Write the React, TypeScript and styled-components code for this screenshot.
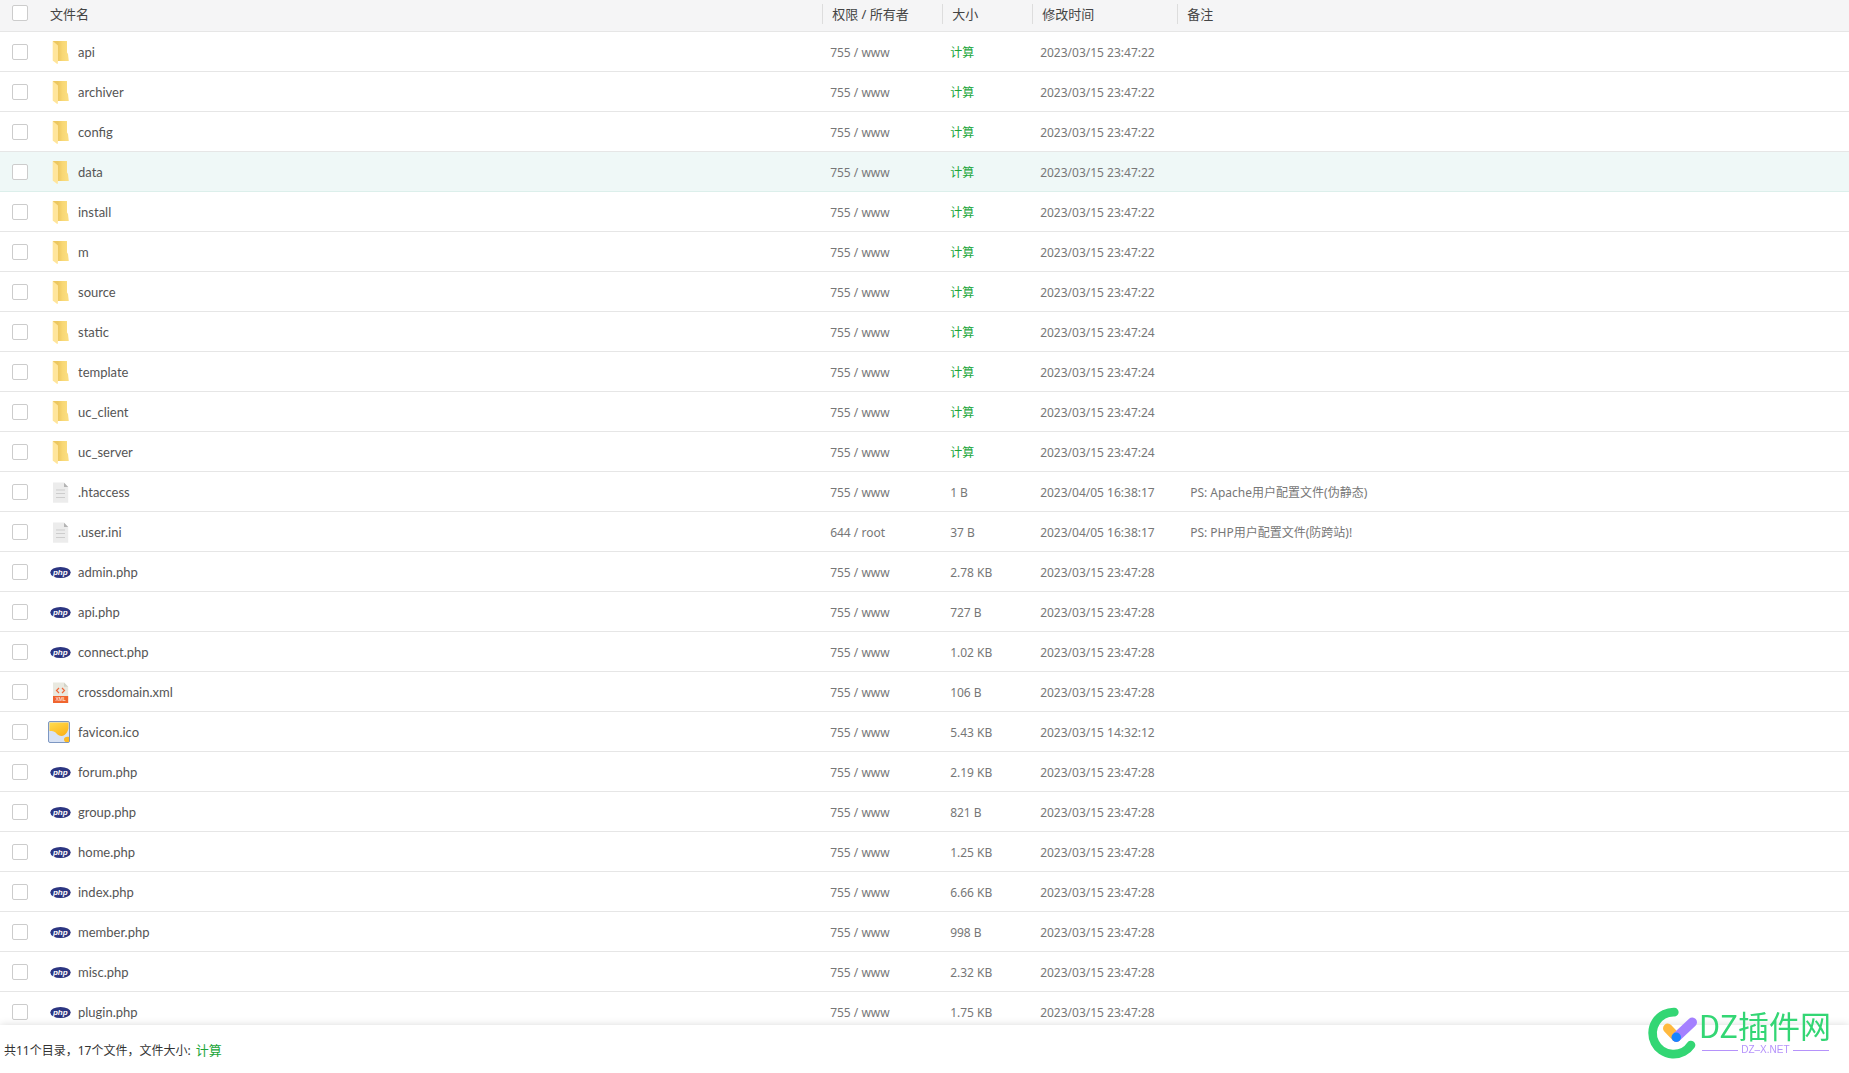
import React from "react";
import styled, { createGlobalStyle, css } from "styled-components";

const GlobalStyle = createGlobalStyle`
  *, *::before, *::after { box-sizing: border-box; }
  body {
    margin: 0;
    background: #fff;
    color: #777;
    font-family: "Noto Sans", "Noto Sans CJK SC", sans-serif;
    font-size: 12px;
  }
`;

const Page = styled.div`
  display: flex;
  flex-direction: column;
  height: 100vh;
`;

const ListArea = styled.main`
  flex: 1;
  min-height: 0;
  overflow: hidden;
`;

const Table = styled.table`
  width: 100%;
  table-layout: fixed;
  border-collapse: separate;
  border-spacing: 0;
`;

const CheckCol = styled.col`width: 40px;`;
const NameCol = styled.col`width: 42.3%;`;
const PermCol = styled.col`width: 120px;`;
const SizeCol = styled.col`width: 90px;`;
const TimeCol = styled.col`width: 145px;`;

const HeadCell = styled.th`
  height: 32px;
  padding: 4px 0 7px;
  background: #f5f5f6;
  border-bottom: 1px solid #e6e6e6;
  text-align: left;
  font-weight: 400;
`;

const HeadCheckCell = styled(HeadCell)`
  padding: 5px 0 0;
  vertical-align: top;
`;

const HeadLabel = styled.span<{ $divided?: boolean }>`
  display: block;
  height: 20px;
  padding-left: 9px;
  border-left: 1px solid ${(p) => (p.$divided ? "#ddd" : "transparent")};
  color: #444;
  font-size: 13px;
  line-height: 20px;
`;

const Row = styled.tr<{ $active?: boolean }>`
  --line: #e6e6e6;
  ${(p) =>
    p.$active &&
    css`
      --line: #dcefeb;
      background: #eff8f7;
    `}
`;

const Cell = styled.td`
  height: 40px;
  padding: 0;
  border-bottom: 1px solid var(--line);
`;

const NameCell = styled(Cell)`
  padding-left: 8px;
`;

const TextCell = styled(Cell)<{ $indent?: number }>`
  padding: 2px 0 0 ${(p) => p.$indent ?? 8}px;
  line-height: 20px;
  white-space: nowrap;
`;

const CheckBox = styled.input.attrs({ type: "checkbox" })`
  appearance: none;
  display: block;
  width: 16px;
  height: 16px;
  margin: 0 0 0 12px;
  border: 1px solid #ccc;
  border-radius: 2px;
  background: #fff;
  &:checked { background: #20a53a; }
`;

const FileLink = styled.a`
  display: flex;
  align-items: center;
  gap: 6px;
  color: #555;
  font-family: Lato, "Noto Sans CJK SC", sans-serif;
  font-size: 13px;
  line-height: 20px;
  text-decoration: none;
`;

const FileName = styled.span`
  padding-top: 1px;
`;

const Icon = styled.svg.attrs({ viewBox: "0 0 24 24", "aria-hidden": true })`
  flex: none;
  width: 24px;
  height: 24px;
`;

const CalcButton = styled.button`
  padding: 0;
  border: 0;
  background: none;
  color: #20a53a;
  font: inherit;
  line-height: 20px;
  cursor: pointer;
`;

const Footer = styled.footer`
  position: relative;
  display: flex;
  align-items: center;
  gap: 5px;
  height: 48px;
  padding: 2px 4px 0;
  background: #fff;
  box-shadow: 0 0 8px rgba(0, 0, 0, 0.15);
  color: #333;
  ${CalcButton} { font-size: 13px; }
`;

const Brand = styled.aside`
  position: fixed;
  right: 18px;
  bottom: 14px;
  display: flex;
  gap: 1px;
`;

const BrandMark = styled.svg`
  width: 50px;
  height: 52px;
`;

const BrandText = styled.div`
  display: flex;
  flex-direction: column;
  font-family: "Noto Sans CJK SC", sans-serif;
`;

const BrandName = styled.span`
  color: #33d674;
  font-size: 31px;
  line-height: 36px;
`;

const BrandSite = styled.span`
  display: flex;
  align-items: center;
  gap: 3px;
  padding: 0 2px 0 3px;
  color: #b592fb;
  font-family: "Liberation Sans", sans-serif;
  font-size: 10px;
  line-height: 14px;
  &::before, &::after {
    content: "";
    flex: 1;
    height: 1px;
    background: #b592fb;
  }
`;

type Kind = "folder" | "text" | "php" | "xml" | "image";

function FileIcon({ kind }: { kind: Kind }) {
  switch (kind) {
    case "folder":
      return (
        <Icon>
          <defs>
            <linearGradient id="folder-back" x1="0" x2="1" y1="0" y2="0">
              <stop offset=".3" stopColor="#ecc761" />
              <stop offset=".6" stopColor="#f8d774" />
              <stop offset="1" stopColor="#fbdf84" />
            </linearGradient>
          </defs>
          <path d="M5 1h14v11.500l1 1.500.8 7H5z" fill="url(#folder-back)" />
          <path d="M4.700 1l5.300 4.500v15.500l-.4 3.300-4.900-3.800z" fill="#ffe59b" />
        </Icon>
      );
    case "text":
      return (
        <Icon>
          <path d="M5 2.500h11l4.200 4.300v16H5z" fill="#ececec" />
          <path d="M16 2.800l4.200 4.200H16z" fill="#b4b4b4" />
          <path d="M8 10h9M8 13.500h9M8 17.500h9" stroke="#cdcdcd" strokeWidth="1" />
        </Icon>
      );
    case "php":
      return (
        <Icon>
          <ellipse cx="12.500" cy="12.500" rx="10.200" ry="5.500" fill="#2b3581" />
          <text x="12.300" y="14.800" textAnchor="middle" fill="#fff" fontSize="8" fontWeight="700" fontStyle="italic" fontFamily="Liberation Sans, sans-serif">php</text>
        </Icon>
      );
    case "xml":
      return (
        <Icon>
          <path d="M5 2.500h11l4.200 4.300V16H5z" fill="#e9e9e0" />
          <path d="M16 2.500l4.200 4.300H16z" fill="#d3d3c8" />
          <path d="M11 8l-2.500 2.500L11 13M14 8l2.500 2.500L14 13" fill="none" stroke="#f0683a" strokeWidth="1.200" />
          <path d="M5 16h15.200v7H5z" fill="#f0652f" />
          <text x="12.600" y="21.400" textAnchor="middle" fill="#fff" fontSize="5" fontFamily="Liberation Sans, sans-serif">XML</text>
        </Icon>
      );
    default:
      return (
        <Icon>
          <defs>
            <linearGradient id="paint-drop" x1="0" x2=".6" y1="0" y2="1">
              <stop offset="0" stopColor="#ffdc4e" />
              <stop offset="1" stopColor="#fcb51c" />
            </linearGradient>
          </defs>
          <rect x=".5" y="1.500" width="21" height="21" rx="1.500" fill="#d8e2f4" stroke="#7d97c2" />
          <path d="M1.500 2.500h19v6c-.5 2.500-2 5-4 6.500-2.500 1.800-6 1-8-1.500-1.500-2-3.500-2.500-7-2.500z" fill="url(#paint-drop)" />
          <path d="M16 19.500c0-2 1.800-3 5-2.500V22h-3.500c-1-.5-1.500-1.500-1.500-2.500z" fill="#fdbb25" />
        </Icon>
      );
  }
}

interface FileItem {
  name: string;
  kind: Kind;
  time: string;
  size?: string;
  perm?: string;
  note?: string;
}

const T22 = "2023/03/15 23:47:22";
const T24 = "2023/03/15 23:47:24";
const T28 = "2023/03/15 23:47:28";
const T17 = "2023/04/05 16:38:17";

const files: FileItem[] = [
  { name: "api", kind: "folder", time: T22 },
  { name: "archiver", kind: "folder", time: T22 },
  { name: "config", kind: "folder", time: T22 },
  { name: "data", kind: "folder", time: T22 },
  { name: "install", kind: "folder", time: T22 },
  { name: "m", kind: "folder", time: T22 },
  { name: "source", kind: "folder", time: T22 },
  { name: "static", kind: "folder", time: T24 },
  { name: "template", kind: "folder", time: T24 },
  { name: "uc_client", kind: "folder", time: T24 },
  { name: "uc_server", kind: "folder", time: T24 },
  { name: ".htaccess", kind: "text", time: T17, size: "1 B", note: "PS: Apache用户配置文件(伪静态)" },
  { name: ".user.ini", kind: "text", time: T17, size: "37 B", perm: "644 / root", note: "PS: PHP用户配置文件(防跨站)!" },
  { name: "admin.php", kind: "php", time: T28, size: "2.78 KB" },
  { name: "api.php", kind: "php", time: T28, size: "727 B" },
  { name: "connect.php", kind: "php", time: T28, size: "1.02 KB" },
  { name: "crossdomain.xml", kind: "xml", time: T28, size: "106 B" },
  { name: "favicon.ico", kind: "image", time: "2023/03/15 14:32:12", size: "5.43 KB" },
  { name: "forum.php", kind: "php", time: T28, size: "2.19 KB" },
  { name: "group.php", kind: "php", time: T28, size: "821 B" },
  { name: "home.php", kind: "php", time: T28, size: "1.25 KB" },
  { name: "index.php", kind: "php", time: T28, size: "6.66 KB" },
  { name: "member.php", kind: "php", time: T28, size: "998 B" },
  { name: "misc.php", kind: "php", time: T28, size: "2.32 KB" },
  { name: "plugin.php", kind: "php", time: T28, size: "1.75 KB" },
];

export default function App() {
  return (
    <Page>
      <GlobalStyle />
      <ListArea>
        <Table>
          <colgroup>
            <CheckCol />
            <NameCol />
            <PermCol />
            <SizeCol />
            <TimeCol />
            <col />
          </colgroup>
          <thead>
            <tr>
              <HeadCheckCell><CheckBox aria-label="全选" /></HeadCheckCell>
              <HeadCell><HeadLabel>文件名</HeadLabel></HeadCell>
              <HeadCell><HeadLabel $divided>权限 / 所有者</HeadLabel></HeadCell>
              <HeadCell><HeadLabel $divided>大小</HeadLabel></HeadCell>
              <HeadCell><HeadLabel $divided>修改时间</HeadLabel></HeadCell>
              <HeadCell><HeadLabel $divided>备注</HeadLabel></HeadCell>
            </tr>
          </thead>
          <tbody>
            {files.map((f) => (
              <Row key={f.name} $active={f.name === "data"}>
                <Cell><CheckBox aria-label={f.name} /></Cell>
                <NameCell>
                  <FileLink href={`#${f.name}`}>
                    <FileIcon kind={f.kind} />
                    <FileName>{f.name}</FileName>
                  </FileLink>
                </NameCell>
                <TextCell>{f.perm ?? "755 / www"}</TextCell>
                <TextCell>{f.size ?? <CalcButton type="button">计算</CalcButton>}</TextCell>
                <TextCell>{f.time}</TextCell>
                <TextCell $indent={13}>{f.note}</TextCell>
              </Row>
            ))}
          </tbody>
        </Table>
      </ListArea>
      <Footer>
        <span>共11个目录，17个文件，文件大小:</span>
        <CalcButton type="button">计算</CalcButton>
      </Footer>
      <Brand>
        <BrandMark viewBox="0 0 50 52" aria-hidden="true">
          <path d="M26.300 5.200A21 21 0 1 0 43 38" fill="none" stroke="#33d674" strokeWidth="8.700" strokeLinecap="round" />
          <path d="M19.700 21.300l8.600 9" stroke="#ffb93e" strokeWidth="9.400" strokeLinecap="round" />
          <path d="M28.300 30.300l16-15" stroke="#a480ff" strokeWidth="9.400" strokeLinecap="round" />
          <circle cx="28.300" cy="30.300" r="4.700" fill="#1785ff" />
        </BrandMark>
        <BrandText>
          <BrandName>DZ插件网</BrandName>
          <BrandSite>DZ–X.NET</BrandSite>
        </BrandText>
      </Brand>
    </Page>
  );
}
